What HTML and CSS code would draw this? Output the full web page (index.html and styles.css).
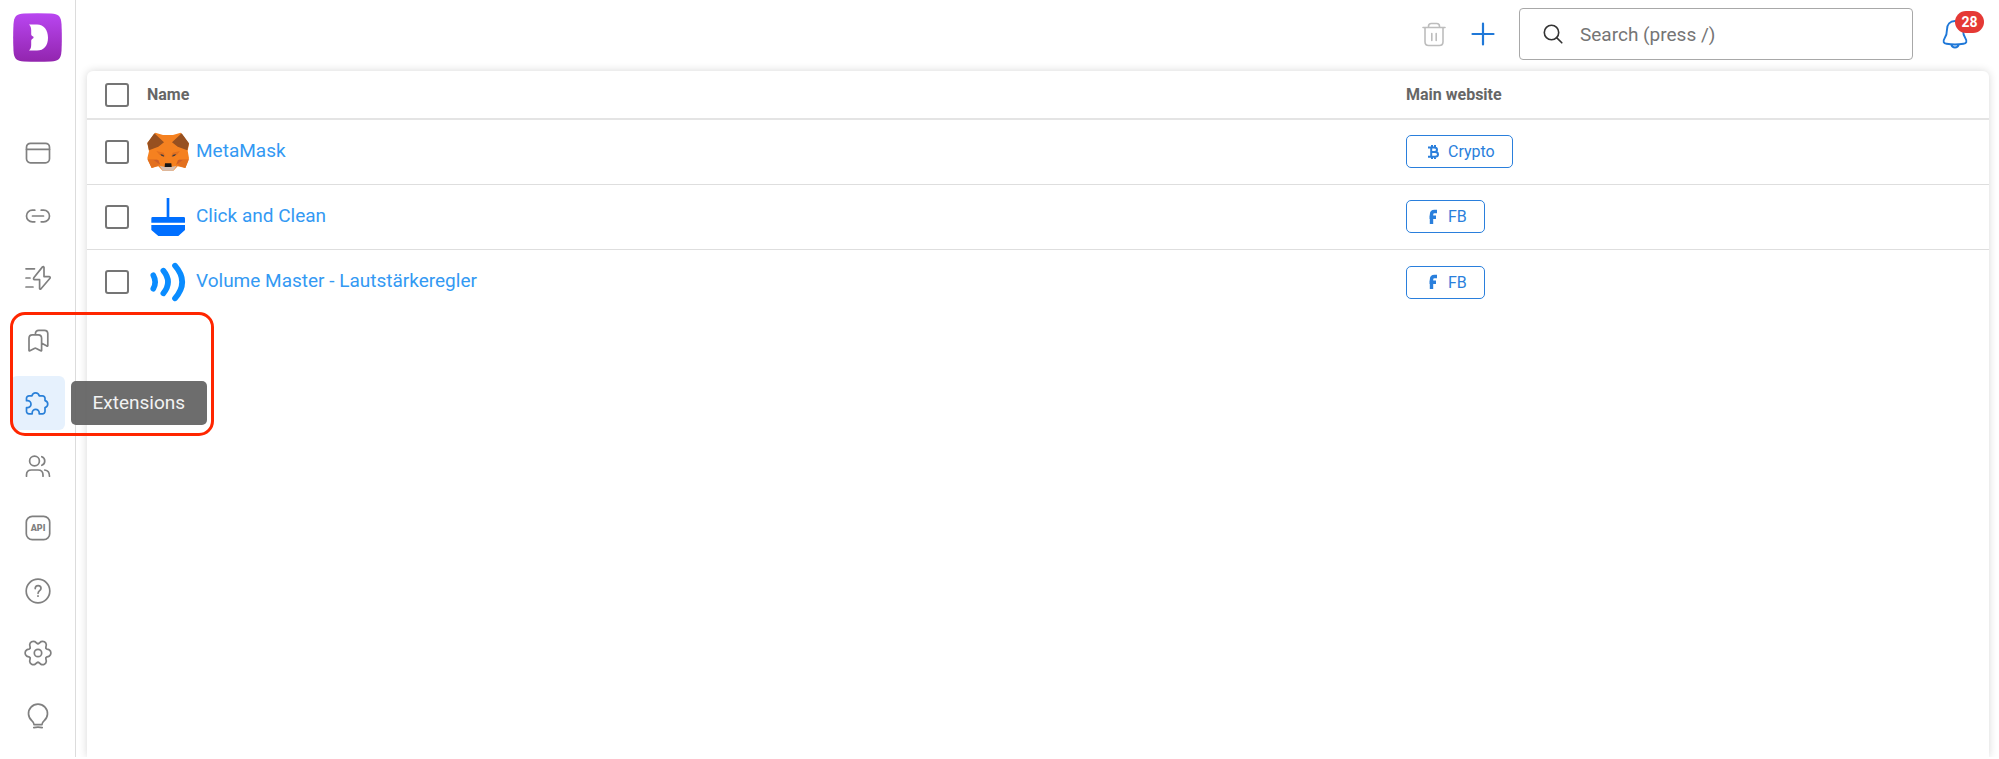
FILE: index.html
```
<!DOCTYPE html>
<html lang="en">
<head>
  <meta charset="UTF-8">
  <meta name="viewport" content="width=device-width, initial-scale=1.0">
  <title>Extensions</title>
  <link rel="stylesheet" href="styles.css">
</head>
<body>

<aside class="sidebar">
  <a href="#" class="logo" aria-label="Home">
    <svg viewBox="0 0 49 49">
      <defs>
        <linearGradient id="logoFill" x1="0" y1="0" x2="0" y2="1">
          <stop offset="0" stop-color="#b946f1"/>
          <stop offset="1" stop-color="#9225ae"/>
        </linearGradient>
      </defs>
      <path fill="url(#logoFill)" d="M11 .5Q24.500-.2 38 .5Q43.500.8 46 3Q48.200 5.500 48.500 11Q49.200 24.500 48.500 38Q48.200 43.500 46 46Q43.500 48.200 38 48.500Q24.500 49.200 11 48.500Q5.500 48.200 3 46Q.8 43.500.5 38Q-.2 24.500.5 11Q.8 5.500 3 3Q5.500.8 11 .5z"/>
      <path fill="#fff" d="M16 11.500H24C31 11.500 35 17 35 24.700C35 32.500 31 37.500 24 37.500H16C17.800 36 18.200 34 18.200 31.500V27.500Q18.200 26 20.500 25V23.800Q18.200 23 18.200 21.500V17.500C18.200 15 17.800 13 16 11.500z"/>
    </svg>
  </a>

  <nav class="menu">
    <a href="#" class="menu-item" aria-label="Browsers">
      <svg viewBox="0 0 28 28"><rect x="2.500" y="4.300" width="23" height="19.500" rx="4"/><path d="M2.500 10.300h23"/></svg>
    </a>
    <a href="#" class="menu-item" aria-label="Proxies">
      <svg viewBox="0 0 28 28"><path d="M10.800 8.200H8.300a5.800 5.800 0 0 0 0 11.600h2.500M17.200 8.200h2.500a5.800 5.800 0 0 1 0 11.600h-2.500M8.500 14h11"/></svg>
    </a>
    <a href="#" class="menu-item" aria-label="Automation">
      <svg viewBox="0 0 28 28"><path d="M2 4.800h8.500M2 14h4M2 23h7M18.500 2.900L9.800 13.800q-.8 1.600.8 1.800h5v9q.3 1.100 1.200.4L26 14.300q.6-1.400-.8-1.700H20V3.300q-.5-1.200-1.500-.4z"/></svg>
    </a>
    <a href="#" class="menu-item" aria-label="Bookmarks">
      <svg viewBox="0 0 28 28"><path d="M5 23.400V11.200q0-3.400 3.400-3.400h5.800q3.400 0 3.400 3.400v12.200q-.2.700-.9.400l-4.400-2.400q-1-.5-2 0l-4.400 2.400q-.7.300-.9-.4zM11.400 7.600V7q0-3.700 3.400-3.700h5.600q3.400 0 3.400 3.400v12q-.2.700-.9.400l-4.700-2.500"/></svg>
    </a>
    <div class="menu-current">
      <a href="#" class="menu-item active" aria-label="Extensions">
        <svg viewBox="0 0 28 28"><path d="M5 6.800h3a3.700 3.700 0 0 1 7.200 0h3.300a2.500 2.500 0 0 1 2.500 2.500v2.300a3.600 3.600 0 0 1 0 7v3.700a2.500 2.500 0 0 1-2.500 2.500h-3.300v-1a3.500 3.500 0 0 0-7 0v1H5a2.500 2.500 0 0 1-2.500-2.500v-3.600h1a3.500 3.500 0 0 0 0-7h-1V9.300A2.500 2.500 0 0 1 5 6.800z"/></svg>
      </a>
      <div class="tooltip">Extensions</div>
      <div class="highlight"></div>
    </div>
    <a href="#" class="menu-item" aria-label="Team">
      <svg viewBox="0 0 28 28"><circle cx="10.500" cy="9" r="4.900"/><path d="M17.800 4.700a4.600 4.600 0 0 1 0 8.600M2.500 24.200v-1.200q0-5 5-5h6.500q5 0 5 5v1.200M20.700 18q4.800.6 4.800 6.200"/></svg>
    </a>
    <a href="#" class="menu-item" aria-label="API">
      <svg viewBox="0 0 28 28"><rect x="2.300" y="2.300" width="23.400" height="23.400" rx="6"/><text x="14" y="17.200" text-anchor="middle">API</text></svg>
    </a>
    <a href="#" class="menu-item" aria-label="Help">
      <svg viewBox="0 0 28 28"><circle cx="14" cy="14" r="11.800"/><path d="M11.200 11.600q0-3 2.900-3t2.900 2.700q0 1.300-1.400 2.400t-1.500 2.600M14 18.800v.4"/></svg>
    </a>
    <a href="#" class="menu-item" aria-label="Settings">
      <svg viewBox="0 0 28 28">
        <defs><path id="tooth" d="M8.050-4.650C8.800-3.300 10.300-3.800 11.400-3C13.400-1.600 13.400 1.600 11.400 3C10.300 3.800 8.800 3.300 8.050 4.650"/></defs>
        <g transform="translate(14 14)">
          <use href="#tooth"/>
          <use href="#tooth" transform="rotate(60)"/>
          <use href="#tooth" transform="rotate(120)"/>
          <use href="#tooth" transform="rotate(180)"/>
          <use href="#tooth" transform="rotate(240)"/>
          <use href="#tooth" transform="rotate(300)"/>
          <circle r="3.700"/>
        </g>
      </svg>
    </a>
    <a href="#" class="menu-item" aria-label="Ideas">
      <svg viewBox="0 0 28 28"><path d="M10 22.600q0-2-2-3.700a9.500 9.500 0 1 1 12 0q-2 1.700-2 3.700zM9.800 25.600q4.200-1 8.400 0"/></svg>
    </a>
  </nav>
</aside>

<main class="content">
  <header class="topbar">
    <button class="icon-button" aria-label="Delete" disabled>
      <svg viewBox="0 0 26 26"><path d="M2 6.500h22M7.500 6.500V5.300q0-2.800 2.800-2.800h5.400q2.800 0 2.800 2.800v1.200M4 6.500v14.300q0 3.700 3.700 3.700h10.600q3.700 0 3.700-3.700V6.500M10.800 12.500v7M15.200 12.500v7"/></svg>
    </button>
    <button class="icon-button add" aria-label="Add">
      <svg viewBox="0 0 26 26"><path d="M13 2.500v21M2.500 13h21"/></svg>
    </button>
    <label class="search">
      <svg viewBox="0 0 20 20"><circle cx="8.500" cy="8.500" r="7.200"/><path d="M13.600 13.600l5.200 5.200"/></svg>
      <input type="text" placeholder="Search (press /)" aria-label="Search">
    </label>
    <button class="bell" aria-label="Notifications">
      <svg viewBox="0 0 26 30"><path d="M13 2C8 2 5 5.500 5 10.500C5 15 4.600 16.500 2.500 19.500C.6 22.500 1.600 24.500 4.500 24.800Q13 26.300 21.500 24.800C24.400 24.500 25.400 22.500 23.500 19.500C21.400 16.500 21 15 21 10.500C21 5.500 18 2 13 2zM9.300 25.800q.7 2.700 3.700 2.700t3.700-2.700"/></svg>
      <span class="badge">28</span>
    </button>
  </header>

  <section class="card">
    <table>
      <thead>
        <tr>
          <th class="col-check"><input type="checkbox" aria-label="Select all"></th>
          <th>Name</th>
          <th class="col-site">Main website</th>
        </tr>
      </thead>
      <tbody>
        <tr>
          <td><input type="checkbox" aria-label="Select MetaMask"></td>
          <td>
            <div class="name">
              <svg viewBox="0 0 126 120">
                <path fill="#f58120" d="M25 2L48 9H78L101 2L126 36L122 56L126 79L115 108L92 103L79 116H47L34 103L14 108L1 79L6 58L1 33z"/>
                <path fill="#975020" d="M22 4L51 31L34 44L6 55L1 33zM104 4L75 31L92 44L121 55L126 34z"/>
                <path fill="#e2701f" d="M1 82H31L36 100L14 108zM126 82H96L91 100L115 108zM28 57L50 62L55 74L38 69zM99 57L77 62L72 74L89 69z"/>
                <path fill="#cc5f2a" d="M20 84L34 84L40 99zM107 84L93 84L87 99z"/>
                <path fill="#d5bfb2" d="M38 102L52 104H74L89 102L78 116H48z"/>
                <path fill="#3d3c40" d="M40 66L50 69L51 74L43 71zM87 66L77 69L76 74L84 71z"/>
                <path fill="#161616" d="M54 94H73L74 105H53z"/>
              </svg>
              <a href="#">MetaMask</a>
            </div>
          </td>
          <td>
            <button class="tag">
              <svg viewBox="0 0 12 16"><path d="M1 3.500h6q3 0 3 2.300T7 8.100H3.800M4 8.100h3.700q3.300 0 3.300 2.300t-3.300 2.300H1M4.200 3.500v9.200M5 1v2.500M8 1v2.500M5 12.700V15M8 12.700V15"/></svg>
              Crypto
            </button>
          </td>
        </tr>
        <tr>
          <td><input type="checkbox" aria-label="Select Click and Clean"></td>
          <td>
            <div class="name">
              <svg viewBox="0 0 126 120" fill="#006fff"><path d="M59 3h8v57h43q4 0 4 4v13H13V64q0-4 4-4h42zM13 84H114V99L94 117H34L13 99z"/></svg>
              <a href="#">Click and Clean</a>
            </div>
          </td>
          <td>
            <button class="tag">
              <svg viewBox="0 0 12 16"><path d="M4.500 15V5.500q0-3 3-3H10M2.500 8.200H9" stroke-width="3.400"/></svg>
              FB
            </button>
          </td>
        </tr>
        <tr>
          <td><input type="checkbox" aria-label="Select Volume Master"></td>
          <td>
            <div class="name">
              <svg viewBox="0 0 126 120" fill="none" stroke="#0a8cff" stroke-width="17" stroke-linecap="round"><path d="M19 40Q30 60 19 80M49 26Q77 60 49 94M84 11Q127 60 84 109"/></svg>
              <a href="#">Volume Master - Lautstärkeregler</a>
            </div>
          </td>
          <td>
            <button class="tag">
              <svg viewBox="0 0 12 16"><path d="M4.500 15V5.500q0-3 3-3H10M2.500 8.200H9" stroke-width="3.400"/></svg>
              FB
            </button>
          </td>
        </tr>
      </tbody>
    </table>
  </section>
</main>

</body>
</html>
```
FILE: styles.css
```
* {
  box-sizing: border-box;
}
body {
  font-family: Roboto, sans-serif;
  margin: 0;
  padding-bottom: 2px;
  background: white;
  color: #666;
  display: flex;
  height: 100vh;
  overflow: hidden;
}
a {
  text-decoration: none;
}
button {
  background: transparent;
  border: none;
  padding: 0;
  font-family: inherit;
  cursor: pointer;
}

/* Sidebar */
.sidebar {
  width: 76px;
  flex-shrink: 0;
  border-right: 1px solid #dcdcdc;
  display: flex;
  flex-direction: column;
  align-items: center;
  padding: 13px 0 14px;
}
.logo,
.logo svg {
  display: block;
  width: 49px;
  height: 49px;
}
.menu {
  flex: 1;
  margin-top: 64px;
  display: flex;
  flex-direction: column;
  justify-content: space-between;
}
.menu-item {
  display: flex;
  align-items: center;
  justify-content: center;
  width: 54px;
  height: 54px;
  border-radius: 6px;
  color: #808080;
}
.menu-item svg {
  width: 28px;
  height: 28px;
  fill: none;
  stroke: currentColor;
  stroke-width: 1.7;
  stroke-linecap: round;
  stroke-linejoin: round;
}
.menu-item text {
  fill: currentColor;
  stroke: none;
  font-size: 9px;
  font-weight: 900;
}
.menu-item.active {
  background: #e6f1fd;
  color: #2a80d8;
}
.menu-current {
  position: relative;
  z-index: 2;
}
.tooltip {
  position: absolute;
  top: 5px;
  left: 60px;
  padding: 10px 22px;
  background: rgba(97, 97, 97, 0.92);
  border-radius: 5px;
  color: #f2f2f2;
  font-size: 19px;
  line-height: 24px;
}
.highlight {
  position: absolute;
  top: -64px;
  left: -1px;
  width: 204px;
  height: 124px;
  border: 3px solid #ff2600;
  border-radius: 15px;
  pointer-events: none;
}

/* Main area */
.content {
  flex: 1;
  min-width: 0;
  display: flex;
  flex-direction: column;
  padding: 8px 10px 0 11px;
  overflow: hidden;
}
.topbar {
  display: flex;
  align-items: center;
  justify-content: flex-end;
  margin-bottom: 11px;
}
.icon-button {
  width: 26px;
  height: 26px;
  margin-right: 23px;
  color: #1f78d8;
}
.icon-button svg {
  display: block;
  fill: none;
  stroke: currentColor;
  stroke-width: 1.6;
  stroke-linecap: round;
}
.icon-button:disabled {
  color: #bdbdbd;
}
.icon-button.add svg {
  stroke-width: 2.2;
}
.search {
  display: flex;
  align-items: center;
  gap: 17px;
  width: 394px;
  height: 52px;
  padding: 0 23px;
  border: 1px solid #a8a8a8;
  border-radius: 4px;
}
.search svg {
  width: 20px;
  height: 20px;
  flex-shrink: 0;
  fill: none;
  stroke: #333;
  stroke-width: 1.6;
  stroke-linecap: round;
}
.search input {
  flex: 1;
  min-width: 0;
  border: none;
  outline: none;
  padding: 0;
  background: transparent;
  font-family: inherit;
  font-size: 19px;
  color: #333;
}
.search input::placeholder {
  color: #757575;
}
.bell {
  position: relative;
  width: 26px;
  height: 30px;
  margin: 0 21px 0 29px;
}
.bell svg {
  display: block;
  fill: none;
  stroke: #1f78d8;
  stroke-width: 1.9;
}
.badge {
  position: absolute;
  top: -8px;
  left: 13px;
  min-width: 29px;
  border-radius: 11px;
  background: #e53935;
  color: white;
  font-size: 14px;
  font-weight: bold;
  line-height: 22px;
}

/* Table */
.card {
  flex: 1;
  border-radius: 6px 6px 0 0;
  background: white;
  box-shadow: 0 0 8px rgba(0, 0, 0, 0.16);
}
table {
  width: 100%;
  border-collapse: separate;
  border-spacing: 0;
  table-layout: fixed;
}
th,
td {
  padding: 0;
  text-align: left;
  vertical-align: middle;
}
th {
  height: 49px;
  border-bottom: 2px solid #e4e4e4;
  font-size: 16px;
  font-weight: bold;
}
td {
  height: 65px;
  padding-bottom: 1px;
  border-bottom: 1px solid #dedede;
}
tbody tr:last-child td {
  border-bottom: none;
}
.col-check {
  width: 60px;
}
.col-site {
  width: 583px;
}
input[type="checkbox"] {
  appearance: none;
  display: block;
  width: 24px;
  height: 24px;
  margin: 0 0 0 18px;
  border: 2px solid #757575;
  border-radius: 3px;
}
.name {
  display: flex;
  align-items: center;
  gap: 7px;
}
.name svg {
  width: 42px;
  height: 40px;
}
.name a {
  padding-bottom: 3px;
  color: #3399f3;
  font-size: 19px;
}
.tag {
  display: flex;
  align-items: center;
  gap: 9px;
  height: 33px;
  padding: 0 17px 0 20px;
  border: 1px solid #2a7fdc;
  border-radius: 5px;
  color: #2a7fdc;
  font-size: 16px;
}
.tag svg {
  width: 12px;
  height: 16px;
  fill: none;
  stroke: currentColor;
  stroke-width: 2;
}
```
